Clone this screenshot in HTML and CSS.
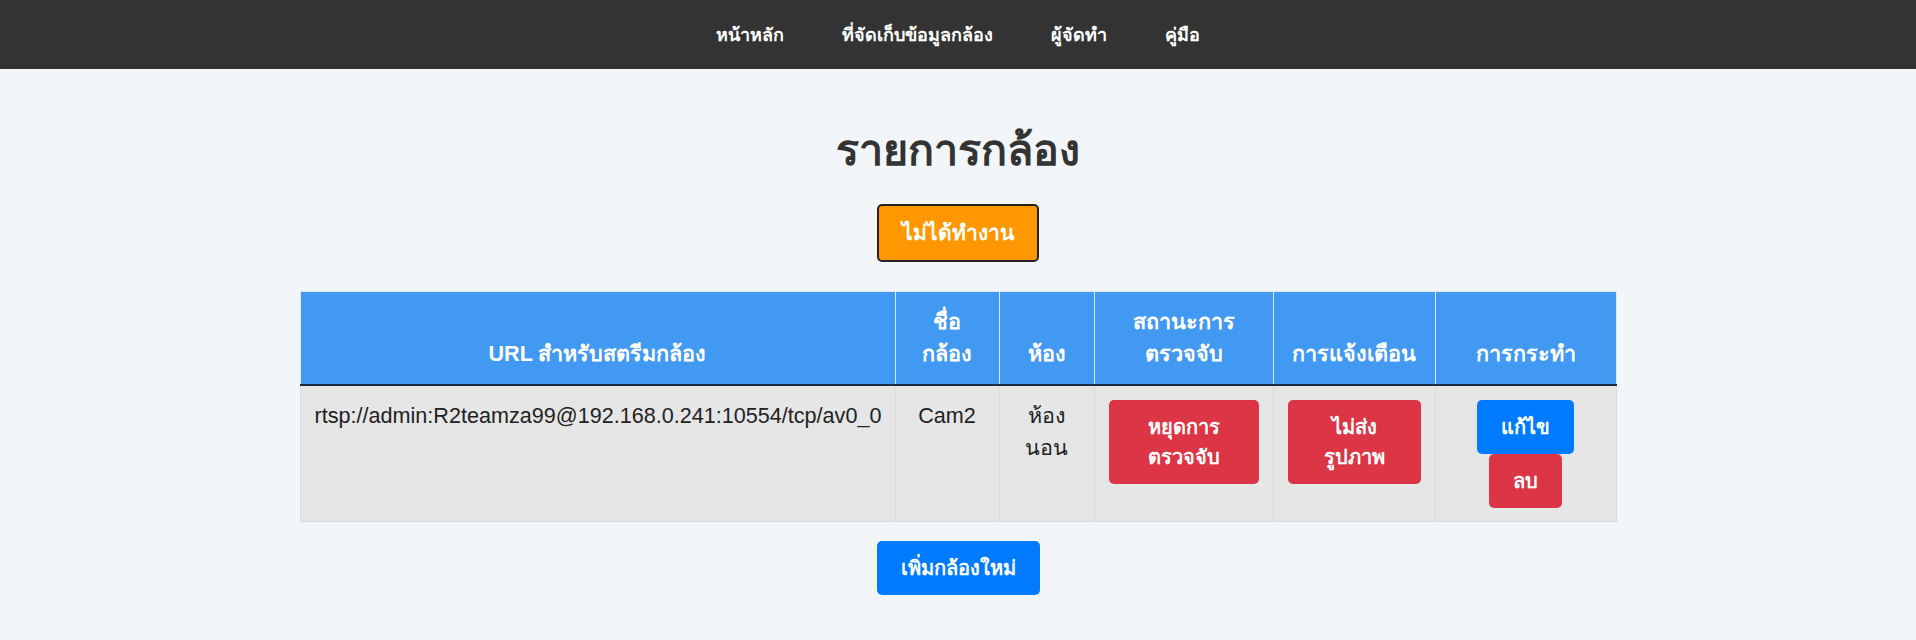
FILE: index.html
```html
<!DOCTYPE html>
<html lang="th">
<head>
<meta charset="utf-8">
<title>รายการกล้อง</title>
<link rel="stylesheet" href="styles.css">
</head>
<body>
<nav class="topnav">
  <a class="nav-link" href="#">หน้าหลัก</a>
  <a class="nav-link" href="#">ที่จัดเก็บข้อมูลกล้อง</a>
  <a class="nav-link" href="#">ผู้จัดทำ</a>
  <a class="nav-link" href="#">คู่มือ</a>
</nav>
<main class="page">
  <h1 class="title">รายการกล้อง</h1>
  <button class="btn btn-status">ไม่ได้ทำงาน</button>
  <table class="cam-table">
    <colgroup>
      <col class="c-url"><col class="c-name"><col class="c-room"><col class="c-state"><col class="c-alert"><col class="c-act">
    </colgroup>
    <thead>
      <tr>
        <th>URL สำหรับสตรีมกล้อง</th>
        <th>ชื่อกล้อง</th>
        <th>ห้อง</th>
        <th>สถานะการตรวจจับ</th>
        <th>การแจ้งเตือน</th>
        <th>การกระทำ</th>
      </tr>
    </thead>
    <tbody>
      <tr>
        <td>rtsp://admin:R2teamza99@192.168.0.241:10554/tcp/av0_0</td>
        <td>Cam2</td>
        <td>ห้องนอน</td>
        <td><button class="btn btn-red btn-fill">หยุดการตรวจจับ</button></td>
        <td><button class="btn btn-red btn-fill">ไม่ส่งรูปภาพ</button></td>
        <td><button class="btn btn-blue">แก้ไข</button><button class="btn btn-red">ลบ</button></td>
      </tr>
    </tbody>
  </table>
  <button class="btn btn-blue btn-add">เพิ่มกล้องใหม่</button>
</main>
</body>
</html>
```
FILE: styles.css
```css
html, body {
  margin: 0;
  padding: 0;
}
body {
  background: #f3f6f9;
  font-family: "Liberation Sans", Tahoma, "Noto Sans", sans-serif;
  color: #333;
}
.topnav {
  height: 69px;
  background: #333333;
  display: flex;
  justify-content: center;
  align-items: center;
}
.nav-link {
  color: #fff;
  text-decoration: none;
  font-weight: bold;
  font-size: 18px;
  padding: 0 29px;
}
.page {
  text-align: center;
  padding-top: 41px;
  padding-bottom: 30px;
}
.title {
  margin: 0 0 14px;
  font-size: 43px;
  line-height: 80px;
  font-weight: bold;
  color: #333;
}
.btn {
  display: inline-block;
  font-family: inherit;
  font-size: 20px;
  line-height: 30px;
  font-weight: bold;
  color: #fff;
  border: none;
  border-radius: 5px;
  padding: 12px 24px;
  margin: 0;
  vertical-align: top;
  cursor: pointer;
}
.btn-status {
  background: #ff9800;
  border: 2px solid #222;
  font-size: 21px;
  padding: 12px 23px;
}
.btn-red { background: #dc3545; }
.btn-blue { background: #007bff; }
.btn-fill { width: 100%; }
.cam-table {
  width: 1316px;
  table-layout: fixed;
  margin: 29px auto 19px;
  border-collapse: collapse;
  font-size: 21.6px;
  line-height: 32px;
}
.c-url { width: 595px; }
.c-name { width: 104px; }
.c-room { width: 95px; }
.c-state { width: 179px; }
.c-alert { width: 162px; }
.c-act { width: 181px; }
.cam-table th {
  background: #4299f1;
  color: #fff;
  font-weight: bold;
  vertical-align: bottom;
  padding: 14px 14px;
  border: 1px solid #dfe7ef;
  border-bottom: 2px solid #1b2b44;
}
.cam-table td {
  background: #e6e6e6;
  color: #222;
  vertical-align: top;
  padding: 14px 14px 13px;
  border: 1px solid #dadada;
}
.btn-add {
  margin-top: 0;
}
```
